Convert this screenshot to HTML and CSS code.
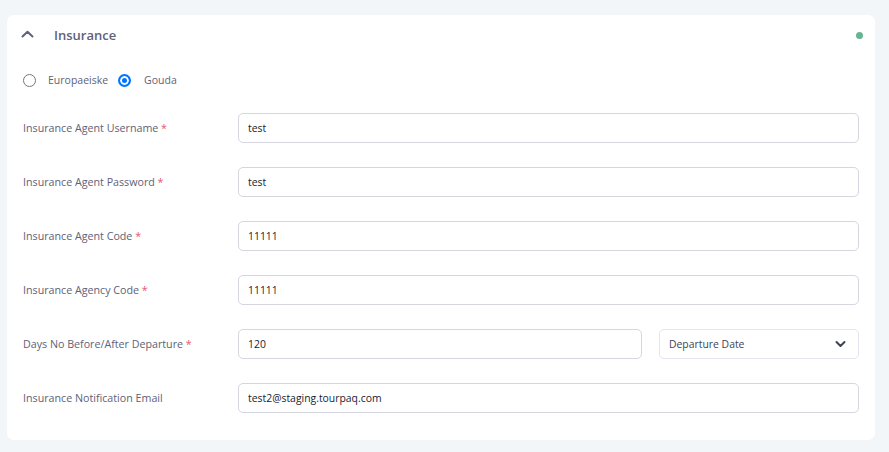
FILE: index.html
```html
<!DOCTYPE html>
<html>
<head>
<meta charset="utf-8">
<link rel="stylesheet" href="styles.css">
</head>
<body>
<div class="card">
  <div class="card-header">
    <svg class="chev" width="13" height="8" viewBox="0 0 13 8"><path d="M1.5 6.5 L6.5 1.8 L11.5 6.5" fill="none" stroke="#5e6278" stroke-width="2" stroke-linecap="round" stroke-linejoin="round"/></svg>
    <span class="title">Insurance</span>
    <span class="dot"></span>
  </div>
  <div class="card-body">
    <div class="radios">
      <label class="radio"><span class="circle"></span>Europaeiske</label>
      <label class="radio"><span class="circle checked"></span>Gouda</label>
    </div>
    <div class="row">
      <div class="label">Insurance Agent Username <span class="req">*</span></div>
      <div class="field"><div class="input">test</div></div>
    </div>
    <div class="row">
      <div class="label">Insurance Agent Password <span class="req">*</span></div>
      <div class="field"><div class="input">test</div></div>
    </div>
    <div class="row">
      <div class="label">Insurance Agent Code <span class="req">*</span></div>
      <div class="field"><div class="input">11111</div></div>
    </div>
    <div class="row">
      <div class="label">Insurance Agency Code <span class="req">*</span></div>
      <div class="field"><div class="input">11111</div></div>
    </div>
    <div class="row">
      <div class="label">Days No Before/After Departure <span class="req">*</span></div>
      <div class="field split">
        <div class="input grow">120</div>
        <div class="input select">Departure Date
          <svg width="11" height="8" viewBox="0 0 11 8"><path d="M1.5 2 L5.5 6 L9.5 2" fill="none" stroke="#3f4254" stroke-width="2" stroke-linecap="round" stroke-linejoin="round"/></svg>
        </div>
      </div>
    </div>
    <div class="row">
      <div class="label">Insurance Notification Email</div>
      <div class="field"><div class="input">test2@staging.tourpaq.com</div></div>
    </div>
  </div>
</div>
</body>
</html>
```
FILE: styles.css
```css
* { box-sizing: border-box; }
body {
  margin: 0;
  background: #f3f6f9;
  font-family: "Open Sans", "Noto Sans", sans-serif;
  padding: 15px 14px 12px 7px;
}
.card {
  background: #fff;
  border-radius: 7px;
  height: 425px;
}
.card-header {
  display: flex;
  align-items: center;
  height: 40px;
  padding: 0 12px 0 14px;
}
.chev { margin-top: -2px; }
.title {
  margin-left: 20px;
  font-size: 13px;
  font-weight: 600;
  color: #5e6278;
}
.dot {
  margin-left: auto;
  width: 7px;
  height: 7px;
  border-radius: 50%;
  background: #67b494;
}
.card-body {
  padding: 10px 16px 0 16px;
}
.radios {
  display: flex;
  align-items: center;
  height: 30px;
  gap: 10px;
}
.radio {
  display: flex;
  align-items: center;
  font-size: 10.5px;
  color: #5e6278;
}
.circle {
  width: 13px;
  height: 13px;
  border-radius: 50%;
  border: 1px solid #767676;
  margin-right: 12px;
  background: #fff;
}
.circle.checked {
  border: 2px solid #0075ff;
  box-shadow: inset 0 0 0 2px #fff;
  background: #0075ff;
  margin-right: 13px;
}
.row {
  display: flex;
  align-items: center;
  margin-top: 24px;
}
.radios + .row { margin-top: 18px; }
.label {
  width: 215px;
  font-size: 10.7px;
  font-weight: 500;
  color: #5e6278;
}
.req { color: #e5566b; }
.field {
  flex: 1;
  display: flex;
  gap: 17px;
}
.input {
  flex: 1;
  height: 30px;
  border: 1px solid #d6d6e0;
  border-radius: 5px;
  display: flex;
  align-items: center;
  padding: 0 9px;
  font-size: 10.4px;
  color: #181c32;
}
.select {
  flex: 0 0 200px;
  border-color: #e4e6ef;
  justify-content: space-between;
  color: #3f4254;
  padding-right: 12px;
}
```
